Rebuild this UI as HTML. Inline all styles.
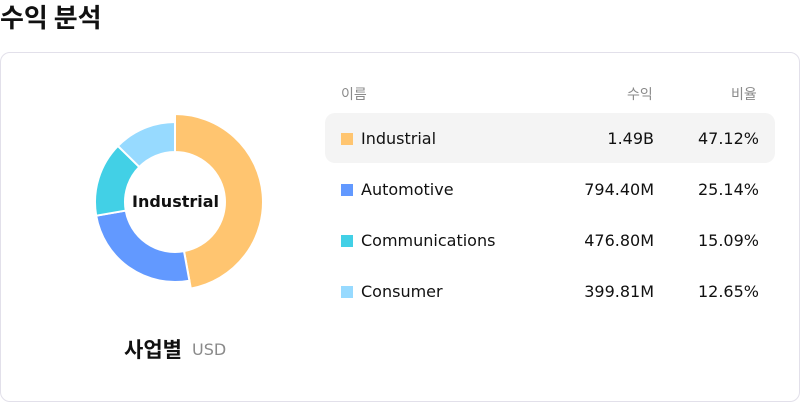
<!DOCTYPE html>
<html><head><meta charset="utf-8"><style>
*{margin:0;padding:0;box-sizing:border-box}
body{width:800px;height:402px;background:#fff;font-family:"DejaVu Sans","Liberation Sans","Noto Sans CJK KR",sans-serif;color:#111;position:relative;overflow:hidden}
h1{position:absolute;left:0;top:-2px;font-size:26px;font-weight:bold;font-family:"Noto Sans CJK KR",sans-serif;letter-spacing:0}
.card{position:absolute;left:0;top:52px;width:800px;height:350px;border:1px solid #e2e0ea;border-radius:10px}
.t{position:absolute;font-size:16px;white-space:nowrap}
.h{position:absolute;font-size:14px;color:#8a8a8a;font-family:"Noto Sans CJK KR",sans-serif}
.hl{position:absolute;left:325px;top:113px;width:450px;height:50px;background:#f4f4f4;border-radius:10px}
.sw{position:absolute;width:12px;height:12px;left:341px}
.r{text-align:right}
</style></head><body>
<h1>수익 분석</h1>
<div class="card"></div>
<svg id="d" width="800" height="402" style="position:absolute;left:0;top:0"></svg>
<div class="t" style="left:132px;top:192px;font-weight:bold;font-size:16px">Industrial</div>
<div class="t" style="left:124px;top:334px;font-weight:bold;font-size:21px;font-family:'Noto Sans CJK KR',sans-serif">사업별</div>
<div class="t" style="left:192px;top:340px;color:#8a8a8a;font-size:16px">USD</div>
<div class="h" style="left:341px;top:84px">이름</div>
<div class="h" style="left:627px;top:84px">수익</div>
<div class="h" style="left:731px;top:84px">비율</div>
<div class="hl"></div>
<div id="rows"></div>
<script>
var data=[["Industrial","1.49B","47.12%",47.12,"#ffc570"],["Automotive","794.40M","25.14%",25.14,"#6299ff"],["Communications","476.80M","15.09%",15.09,"#42d0e6"],["Consumer","399.81M","12.65%",12.65,"#97daff"]];
var h="";data.forEach(function(d,i){var y=129+51*i;
h+='<div class="sw" style="top:'+(y+4)+'px;background:'+d[4]+'"></div><div class="t" style="left:361px;top:'+y+'px">'+d[0]+'</div><div class="t r" style="right:146px;top:'+y+'px">'+d[1]+'</div><div class="t r" style="right:41px;top:'+y+'px">'+d[2]+'</div>';});
document.getElementById("rows").innerHTML=h;
var cx=175,cy=202,a=-Math.PI/2,s="";
data.forEach(function(d,i){var R=i==0?88:80,r=50,b=a+d[3]/100*2*Math.PI,l=(b-a)>Math.PI?1:0;
function p(rr,t){return (cx+rr*Math.cos(t)).toFixed(2)+","+(cy+rr*Math.sin(t)).toFixed(2)}
s+='<path d="M'+p(R,a)+"A"+R+","+R+" 0 "+l+" 1 "+p(R,b)+"L"+p(r,b)+"A"+r+","+r+" 0 "+l+" 0 "+p(r,a)+'Z" fill="'+d[4]+'" stroke="#fff" stroke-width="2"/>';a=b;});
document.getElementById("d").innerHTML=s;
</script>
</body></html>
